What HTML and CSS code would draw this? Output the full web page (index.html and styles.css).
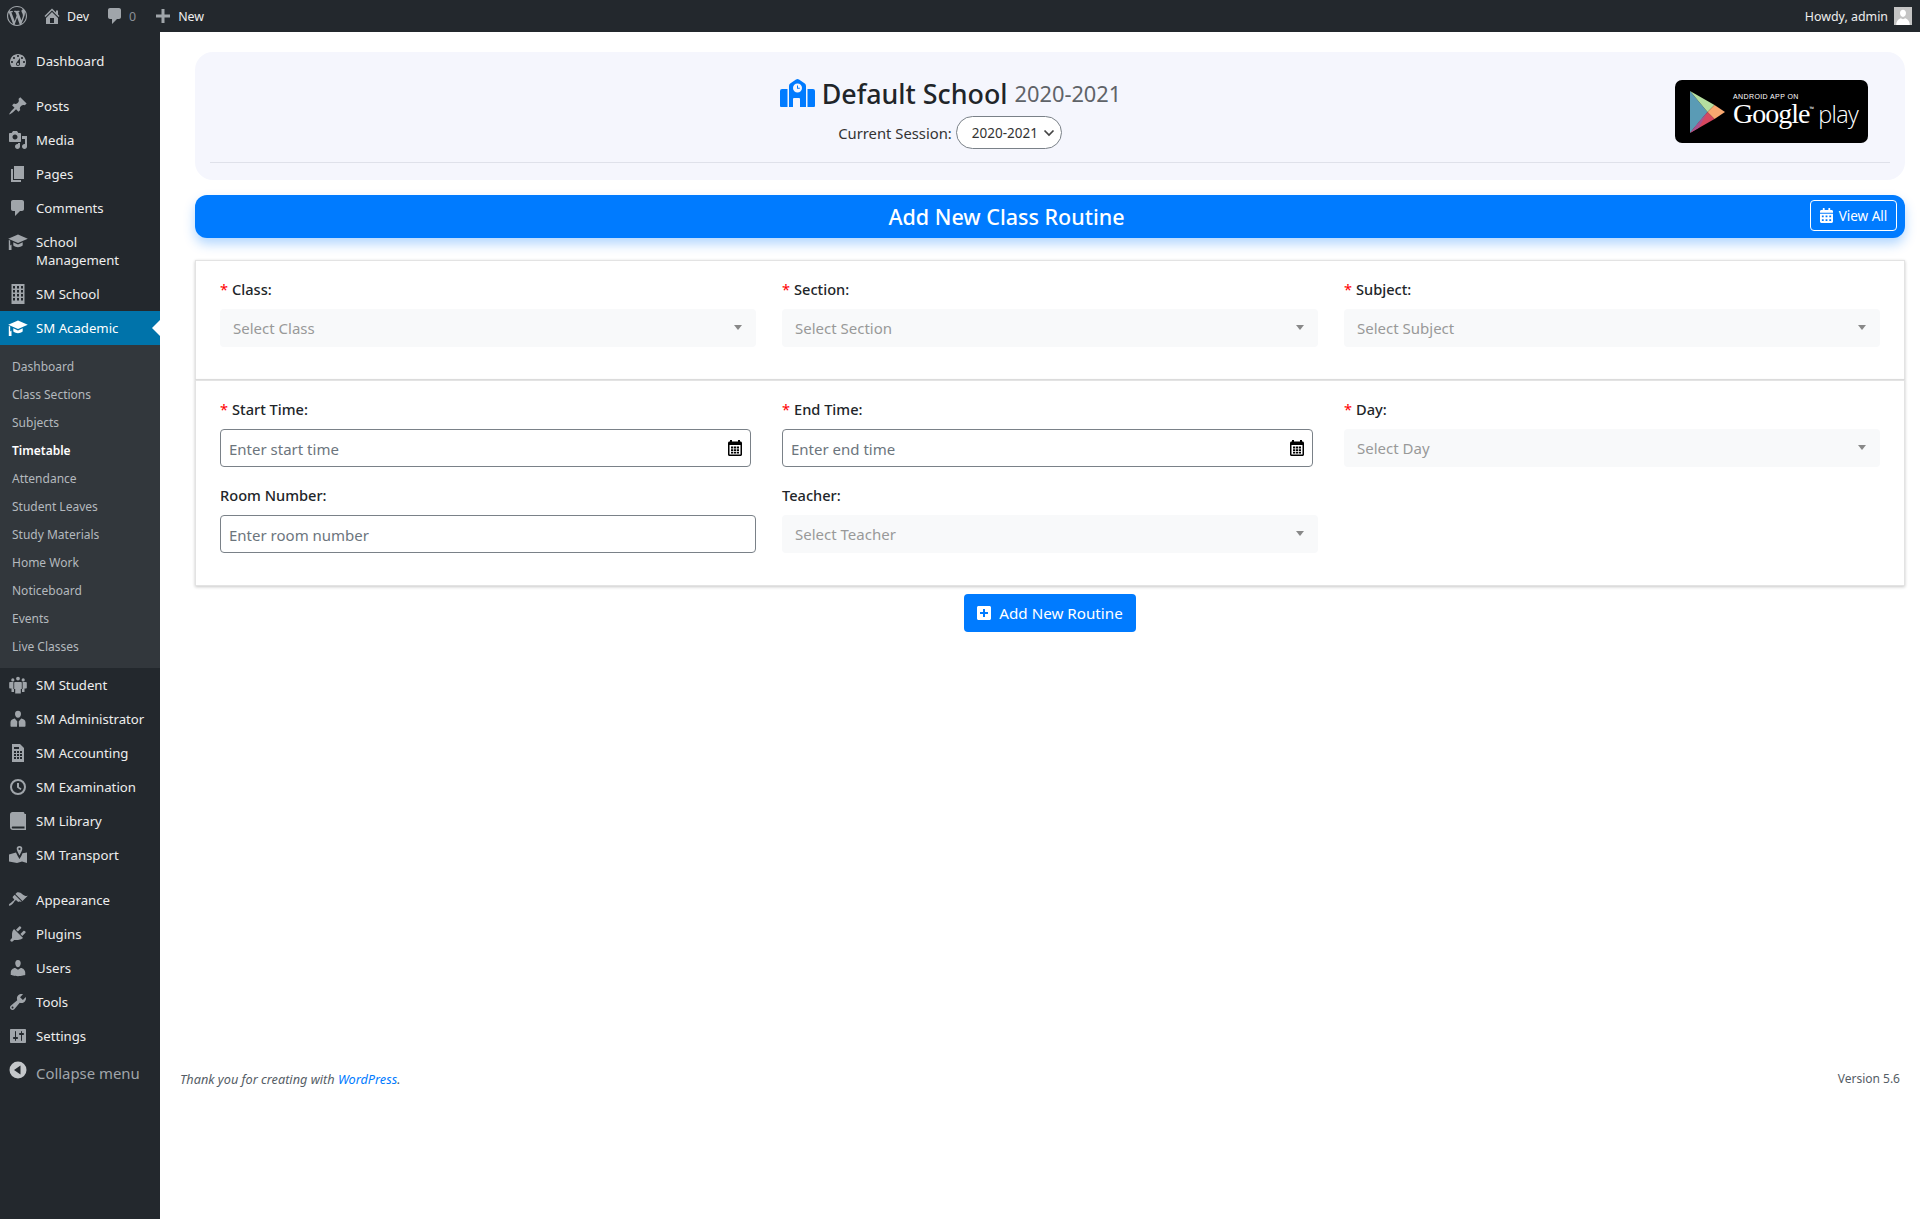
FILE: index.html
```html
<!DOCTYPE html>
<html lang="en">
<head>
  <meta charset="UTF-8" />
  <title>Add New Class Routine</title>
  <link rel="stylesheet" href="styles.css">
</head>
<body>

  <svg class="defs" xmlns="http://www.w3.org/2000/svg">
    <symbol id="i-wp" viewBox="0 0 20 20"><path fill-rule="evenodd" d="M20 10c0-5.51-4.49-10-10-10C4.48 0 0 4.49 0 10c0 5.52 4.48 10 10 10 5.51 0 10-4.48 10-10zM7.78 15.37L4.37 6.22c.55-.02 1.17-.08 1.17-.08.5-.06.44-1.13-.06-1.11 0 0-1.45.11-2.37.11-.18 0-.37 0-.58-.01C4.12 2.69 6.87 1.11 10 1.11c2.33 0 4.45.87 6.05 2.34-.68-.11-1.65.39-1.65 1.58 0 .74.45 1.36.9 2.1.35.61.55 1.36.55 2.46 0 1.49-1.4 5-1.4 5l-3.03-8.37c.54-.02.82-.17.82-.17.5-.05.44-1.25-.06-1.22 0 0-1.44.12-2.38.12-.87 0-2.33-.12-2.33-.12-.5-.03-.56 1.2-.06 1.22l.92.08 1.26 3.41zM17.41 10c.24-.64.74-1.87.43-4.25.7 1.29 1.05 2.71 1.05 4.25 0 3.29-1.73 6.24-4.4 7.78.97-2.59 1.94-5.2 2.92-7.78zM6.1 18.09C3.12 16.65 1.11 13.53 1.11 10c0-1.3.23-2.48.72-3.59C3.25 10.3 4.67 14.2 6.1 18.09zm4.03-6.63l2.58 6.98c-.86.29-1.76.45-2.71.45-.79 0-1.57-.11-2.29-.33.81-2.38 1.62-4.74 2.42-7.1z"/></symbol>
    <symbol id="i-home" viewBox="0 0 20 20"><path fill-rule="evenodd" d="M16 8.5l1.53 1.53-1.06 1.06L10 4.62l-6.47 6.47-1.06-1.06L10 2.5l4 4v-2h2v4zm-6-2.46l6 5.99V18H4v-5.97zM12 17v-5H8v5h4z"/></symbol>
    <symbol id="i-comment" viewBox="0 0 20 20"><path d="M5 2h9c1.1 0 2 .9 2 2v7c0 1.1-.9 2-2 2h-2l-5 5v-5H5c-1.1 0-2-.9-2-2V4c0-1.1.9-2 2-2z"/></symbol>
    <symbol id="i-plus" viewBox="0 0 20 20"><path d="M17 8.500v3h-5.500V17h-3v-5.500H3v-3h5.500V3h3v5.500z"/></symbol>
    <symbol id="i-dash" viewBox="0 0 20 20"><path fill-rule="evenodd" d="M3.76 16h12.48c1.1-1.37 1.76-3.11 1.76-5 0-4.42-3.58-8-8-8s-8 3.58-8 8c0 1.89.66 3.63 1.76 5zM10 4c.55 0 1 .45 1 1s-.45 1-1 1-1-.45-1-1 .45-1 1-1zM6 6c.55 0 1 .45 1 1s-.45 1-1 1-1-.45-1-1 .45-1 1-1zm8 0c.55 0 1 .45 1 1s-.45 1-1 1-1-.45-1-1 .45-1 1-1zm-5.37 5.55L12 7v6c0 1.1-.9 2-2 2s-2-.9-2-2c0-.57.24-1.08.63-1.45zM4 10c.55 0 1 .45 1 1s-.45 1-1 1-1-.45-1-1 .45-1 1-1zm12 0c.55 0 1 .45 1 1s-.45 1-1 1-1-.45-1-1 .45-1 1-1zm-5 3c0-.55-.45-1-1-1s-1 .45-1 1 .45 1 1 1 1-.45 1-1z"/></symbol>
    <symbol id="i-post" viewBox="0 0 20 20"><path d="M10.44 3.02l1.82-1.82 6.36 6.35-1.83 1.82c-1.05-.68-2.48-.57-3.41.36l-.75.75c-.92.93-1.04 2.35-.35 3.41l-1.83 1.82-2.41-2.41-2.8 2.79c-.42.42-3.38 2.71-3.8 2.29s1.86-3.39 2.28-3.81l2.79-2.79L4.1 9.36l1.83-1.82c1.05.69 2.48.57 3.4-.36l.75-.75c.93-.92 1.05-2.35.36-3.41z"/></symbol>
    <symbol id="i-media" viewBox="0 0 20 20"><path fill-rule="evenodd" d="M13 11V4c0-.55-.45-1-1-1h-1.67L9 1H5L3.67 3H2c-.55 0-1 .45-1 1v7c0 .55.45 1 1 1h10c.55 0 1-.45 1-1zM7 4.5c1.38 0 2.5 1.12 2.5 2.5S8.38 9.5 7 9.5 4.5 8.38 4.5 7 5.62 4.5 7 4.5zM14 6h5v10.5c0 1.38-1.12 2.5-2.5 2.5S14 17.88 14 16.5s1.12-2.5 2.5-2.5c.17 0 .34.02.5.05V9h-3V6zm-4 8.05V13h2v3.5c0 1.38-1.12 2.5-2.5 2.5S7 17.88 7 16.5 8.12 14 9.5 14c.17 0 .34.02.5.05z"/></symbol>
    <symbol id="i-pages" viewBox="0 0 20 20"><path d="M6 15V2h10v13H6zm-1 1h8v2H3V5h2v11z"/></symbol>
    <symbol id="i-learn" viewBox="0 0 20 20"><path d="M10 2.500 19.800 6.800 10 11.100.2 6.800zM5.300 10.300l4.700 2.100 4.700-2.100v3.300c-1.500 1-3.100 1.700-4.700 1.700s-3.200-.7-4.700-1.700zM.8 8l1.400.6v4.900l1.300-1V18H.8z"/></symbol>
    <symbol id="i-building" viewBox="0 0 20 20"><path fill-rule="evenodd" d="M3.500 0h13v20h-13zM5 2v2.500h2V2zm4 0v2.500h2V2zm4 0v2.500h2V2zM5 6v2.500h2V6zm4 0v2.500h2V6zm4 0v2.500h2V6zM5 10v2.500h2V10zm4 0v2.500h2V10zm4 0v2.500h2V10zM5 14v2.500h2V14zm4 0v2.500h2V14zm4 0v2.500h2V14z"/></symbol>
    <symbol id="i-group" viewBox="0 0 20 20"><path d="M10 5.500a1.900 1.900 0 1 0 0-3.800 1.900 1.900 0 0 0 0 3.800zm-5.200 1a1.600 1.600 0 1 0 0-3.200 1.600 1.600 0 0 0 0 3.200zm10.400 0a1.600 1.600 0 1 0 0-3.200 1.600 1.600 0 0 0 0 3.200zM7.200 7h5.600c.6 0 1 .4 1 1v6h-1v4.500H7.200V14h-1V8c0-.6.4-1 1-1zM2.200 7h3.200v7h.6v3H3.500v-3.500H2.200c-.6 0-1-.4-1-1V8c0-.6.4-1 1-1zm12.400 0h3.200c.6 0 1 .4 1 1v4.500c0 .6-.4 1-1 1h-1.300V17H14v-3h.6z"/></symbol>
    <symbol id="i-man" viewBox="0 0 20 20"><path d="M10 8.800c-2 0-3-2-3-3.800C7 3 8.200 1.800 10 1.800S13 3 13 5c0 1.800-1 3.800-3 3.800zM6.800 9.500 9.300 12.500 9 17.800H3.500c-.6 0-1-.4-1-1v-3.600c0-2 2-3.400 4.300-3.700zm6.400 0c2.300.3 4.300 1.700 4.300 3.700v3.600c0 .6-.4 1-1 1H11l-.3-5.300z"/></symbol>
    <symbol id="i-calc" viewBox="0 0 20 20"><path fill-rule="evenodd" d="M4 1h8l4 4v14H4zM6 8v2h2V8zm3 0v2h2V8zm3 0v2h2V8zM6 11v2h2v-2zm3 0v2h2v-2zm3 0v2h2v-2zM6 14v2h2v-2zm3 0v2h2v-2zm3 0v2h2v-2zM6 4v2h5V4z"/></symbol>
    <symbol id="i-clock" viewBox="0 0 20 20"><path fill-rule="evenodd" d="M10 2a8 8 0 1 0 0 16 8 8 0 0 0 0-16zm0 2a6 6 0 1 1 0 12 6 6 0 0 1 0-12zM9 6v4.600l3.500 2.400 1-1.400L11 10V6z"/></symbol>
    <symbol id="i-book" viewBox="0 0 20 20"><path d="M16.500 3H18v16H5c-1.700 0-3-1.300-3-3V3.500C2 2.100 3.100 1 4.500 1h10.500c.8 0 1.500.7 1.500 1.500V15.500H5c-.8 0-1.200.4-1.200 1s.4 1 1.200 1h11.500z"/></symbol>
    <symbol id="i-map" viewBox="0 0 20 20"><path fill-rule="evenodd" d="M11.500 1a2.800 2.800 0 0 0-2.800 2.800c0 1.700 1.800 4.700 2.800 6.700 1-2 2.800-5 2.800-6.700A2.800 2.800 0 0 0 11.500 1zm0 1.800a1.100 1.100 0 1 1 0 2.200 1.100 1.100 0 0 1 0-2.200zM8 7.500 9.700 11l1.800 3 1.800-3 1.200-2.800L19 7.500V18l-5-1.500L9 18l-8-1.500V9.500z"/></symbol>
    <symbol id="i-brush" viewBox="0 0 20 20"><path d="M14.480 11.060L7.410 3.990l1.500-1.500c.5-.56 2.300-.47 3.510.32 1.210.8 1.430 1.280 2.910 2.100 1.180.64 2.450 1.260 4.450.85zm-.71.71L6.700 4.700 4.930 6.470c-.39.39-.39 1.020 0 1.410l1.060 1.060c.39.39.39 1.030 0 1.420-.6.6-1.430 1.110-2.210 1.690-.35.26-.7.53-1.010.84C1.430 13.230.4 14.750 1.100 15.450c.7.7 2.210-.33 3.550-1.670.31-.31.58-.66.85-1.010.57-.78 1.080-1.610 1.690-2.210.39-.39 1.020-.39 1.410 0l1.060 1.060c.39.39 1.020.39 1.410 0z"/></symbol>
    <symbol id="i-plug" viewBox="0 0 20 20"><path d="M13.110 4.360L9.870 7.600 8 5.730l3.240-3.240c.35-.34 1.050-.2 1.560.32.52.51.66 1.210.31 1.550zm-8 1.770l.91-1.120 9.010 9.010-1.190.84c-.71.71-2.630 1.160-3.820 1.160H6.140L4.900 17.260c-.59.59-1.540.59-2.120 0-.59-.58-.59-1.530 0-2.120l1.240-1.240v-3.880c0-1.130.4-3.190 1.090-3.890zm7.260 3.970l3.240-3.240c.34-.35 1.040-.21 1.550.31.52.51.66 1.210.31 1.550l-3.240 3.250z"/></symbol>
    <symbol id="i-user" viewBox="0 0 20 20"><path d="M10 9.250c-2.270 0-2.730-3.440-2.730-3.440C7 4.020 7.820 2 9.970 2c2.160 0 2.980 2.020 2.710 3.810 0 0-.41 3.440-2.680 3.440zm0 2.570L12.720 10c2.390 0 4.520 2.330 4.520 4.530v2.490s-3.650 1.130-7.240 1.130c-3.650 0-7.240-1.130-7.240-1.130v-2.490c0-2.250 1.940-4.480 4.470-4.480z"/></symbol>
    <symbol id="i-tool" viewBox="0 0 20 20"><path fill-rule="evenodd" d="M16.680 9.770c-1.340 1.340-3.30 1.670-4.950.99l-5.410 6.520c-.99.99-2.590.99-3.580 0s-.99-2.590 0-3.570l6.520-5.420c-.68-1.650-.35-3.610.99-4.950 1.280-1.280 3.120-1.620 4.720-1.060l-2.890 2.890 2.820 2.820 2.860-2.870c.53 1.580.18 3.390-1.080 4.650zM3.810 16.210c.4.39 1.040.39 1.430 0 .4-.4.4-1.040 0-1.430-.39-.4-1.030-.4-1.430 0-.39.39-.39 1.030 0 1.430z"/></symbol>
    <symbol id="i-set" viewBox="0 0 20 20"><path fill-rule="evenodd" d="M18 16V4c0-.55-.45-1-1-1H3c-.55 0-1 .45-1 1v12c0 .55.45 1 1 1h14c.55 0 1-.45 1-1zM8 11h1c.55 0 1 .45 1 1s-.45 1-1 1H8v1.500c0 .28-.22.5-.5.5s-.5-.22-.5-.5V13H6c-.55 0-1-.45-1-1s.45-1 1-1h1V5.500c0-.28.22-.5.5-.5s.5.22.5.5V11zm5-2h-1c-.55 0-1-.45-1-1s.45-1 1-1h1V5.500c0-.28.22-.5.5-.5s.5.22.5.5V7h1c.55 0 1 .45 1 1s-.45 1-1 1h-1v5.500c0 .28-.22.5-.5.5s-.5-.22-.5-.5V9z"/></symbol>
    <symbol id="i-back" viewBox="0 0 20 20"><path fill-rule="evenodd" d="M10 1.500a8.500 8.500 0 1 0 0 17 8.500 8.500 0 0 0 0-17zM12.500 14.500 6 10l6.500-4.500z"/></symbol>
    <symbol id="i-cal" viewBox="0 0 448 512"><path d="M0 464c0 26.500 21.500 48 48 48h352c26.500 0 48-21.500 48-48V192H0v272zm320-196c0-6.600 5.400-12 12-12h40c6.600 0 12 5.400 12 12v40c0 6.600-5.400 12-12 12h-40c-6.600 0-12-5.400-12-12v-40zm0 128c0-6.600 5.400-12 12-12h40c6.600 0 12 5.400 12 12v40c0 6.600-5.400 12-12 12h-40c-6.600 0-12-5.400-12-12v-40zM192 268c0-6.600 5.400-12 12-12h40c6.600 0 12 5.400 12 12v40c0 6.600-5.400 12-12 12h-40c-6.600 0-12-5.400-12-12v-40zm0 128c0-6.600 5.400-12 12-12h40c6.600 0 12 5.400 12 12v40c0 6.600-5.400 12-12 12h-40c-6.600 0-12-5.400-12-12v-40zM64 268c0-6.600 5.400-12 12-12h40c6.600 0 12 5.400 12 12v40c0 6.600-5.400 12-12 12H76c-6.600 0-12-5.400-12-12v-40zm0 128c0-6.600 5.400-12 12-12h40c6.600 0 12 5.400 12 12v40c0 6.600-5.400 12-12 12H76c-6.600 0-12-5.400-12-12v-40zM400 64h-48V16c0-8.800-7.200-16-16-16h-32c-8.800 0-16 7.200-16 16v48H160V16c0-8.800-7.200-16-16-16h-32c-8.800 0-16 7.200-16 16v48H48C21.500 64 0 85.500 0 112v48h448v-48c0-26.500-21.500-48-48-48z"/></symbol>
    <symbol id="i-picker" viewBox="0 0 16 16"><path fill-rule="evenodd" d="M3 0h2v1.500h6V0h2v1.500h.5c.8 0 1.500.7 1.500 1.500v11.500c0 .8-.7 1.500-1.500 1.500h-11C1.700 16 1 15.300 1 14.500V3c0-.8.7-1.500 1.500-1.500H3zM2.500 5v9.500h11V5zM4 6.500h2.200v2H4zm2.900 0h2.200v2H6.900zm2.900 0H12v2H9.800zM4 9.300h2.200v2H4zm2.900 0h2.200v2H6.900zm2.900 0H12v2H9.800zM4 12h2.200v1.500H4zm2.900 0h2.200v1.500H6.900zm2.900 0H12v1.500H9.800z"/></symbol>
  </svg>

  <header class="adminbar">
    <svg class="bar-logo"><use href="#i-wp"/></svg>
    <svg class="bar-ic home"><use href="#i-home"/></svg>
    <span class="bar-txt">Dev</span>
    <svg class="bar-ic cmt"><use href="#i-comment"/></svg>
    <span class="bar-txt dim">0</span>
    <svg class="bar-ic plus"><use href="#i-plus"/></svg>
    <span class="bar-txt">New</span>
    <span class="bar-txt howdy">Howdy, admin</span>
    <span class="avatar">
      <svg viewBox="0 0 20 20"><path d="M10 3c2 0 3.300 1.500 3.300 3.700S12 11 10 11 6.700 9 6.700 6.700 8 3 10 3zM2.500 20c0-4.500 3-7 5-7.500l2.500 1 2.500-1c2 .5 5 3 5 7.500z"/></svg>
    </span>
  </header>

  <div class="layout">
    <nav class="sidebar">
      <ul class="menu">
        <li><svg><use href="#i-dash"/></svg>Dashboard</li>
        <li class="sep"><svg><use href="#i-post"/></svg>Posts</li>
        <li><svg><use href="#i-media"/></svg>Media</li>
        <li><svg><use href="#i-pages"/></svg>Pages</li>
        <li><svg><use href="#i-comment"/></svg>Comments</li>
        <li class="two"><svg><use href="#i-learn"/></svg>School<br>Management</li>
        <li><svg><use href="#i-building"/></svg>SM School</li>
        <li class="active"><svg><use href="#i-learn"/></svg>SM Academic</li>
      </ul>
      <ul class="submenu">
        <li>Dashboard</li>
        <li>Class Sections</li>
        <li>Subjects</li>
        <li class="current">Timetable</li>
        <li>Attendance</li>
        <li>Student Leaves</li>
        <li>Study Materials</li>
        <li>Home Work</li>
        <li>Noticeboard</li>
        <li>Events</li>
        <li>Live Classes</li>
      </ul>
      <ul class="menu">
        <li><svg><use href="#i-group"/></svg>SM Student</li>
        <li><svg><use href="#i-man"/></svg>SM Administrator</li>
        <li><svg><use href="#i-calc"/></svg>SM Accounting</li>
        <li><svg><use href="#i-clock"/></svg>SM Examination</li>
        <li><svg><use href="#i-book"/></svg>SM Library</li>
        <li><svg><use href="#i-map"/></svg>SM Transport</li>
        <li class="sep"><svg><use href="#i-brush"/></svg>Appearance</li>
        <li><svg><use href="#i-plug"/></svg>Plugins</li>
        <li><svg><use href="#i-user"/></svg>Users</li>
        <li><svg><use href="#i-tool"/></svg>Tools</li>
        <li><svg><use href="#i-set"/></svg>Settings</li>
        <li class="collapse"><svg><use href="#i-back"/></svg>Collapse menu</li>
      </ul>
    </nav>

    <main class="content">
      <section class="school">
        <div class="school-row">
          <div class="school-info">
            <h1 class="school-name">
              <svg class="school-ic" viewBox="0 0 35 28"><path fill-rule="evenodd" d="M0 12q0-2 2-2h5.500v18H1q-1 0-1-1zM35 12q0-2-2-2h-5.500v18H34q1 0 1-1zM17.500 0q.9 0 1.500.4l5.800 4.200q1.200.8 1.200 2.400V28h-6v-8q0-1-1-1h-5q-1 0-1 1v8H9V7q0-1.600 1.200-2.400L16 .4q.6-.4 1.500-.4zM17.500 4.500a4.500 4.500 0 1 0 0 9 4.500 4.500 0 0 0 0-9zM17 6.500h1v2.200h1.800v1H17z"/></svg>
              Default School <small>2020-2021</small>
            </h1>
            <div class="session">
              <span>Current Session:</span>
              <span class="session-select">2020-2021
                <svg viewBox="0 0 12 8"><path d="M1.500 1.500 6 6l4.500-4.500" fill="none" stroke="#444" stroke-width="1.700"/></svg>
              </span>
            </div>
          </div>
          <div class="play">
            <svg class="play-tri" viewBox="0 0 40 48">
              <polygon points="0,0 0,48 20,24" fill="#5a9bb5"/>
              <polygon points="0,0 28,16 20,24" fill="#b5dfa0"/>
              <polygon points="0,48 28,32 20,24" fill="#d6475f"/>
              <polygon points="0,48 12,33 20,24 10,42" fill="#a8538f"/>
              <polygon points="28,16 40,24 28,32 20,24" fill="#f9a870"/>
            </svg>
            <div class="play-text">
              <span class="play-small">ANDROID APP ON</span>
              <span class="play-big"><span class="google">Google</span><span class="tm">™</span> <span class="gplay">play</span></span>
            </div>
          </div>
        </div>
      </section>

      <div class="titlebar">
        <h2>Add New Class Routine</h2>
        <a class="view-all"><svg><use href="#i-cal"/></svg>View All</a>
      </div>

      <section class="card">
        <div class="grid">
          <div class="field">
            <label><em>*</em>Class:</label>
            <div class="pick">Select Class<i></i></div>
          </div>
          <div class="field">
            <label><em>*</em>Section:</label>
            <div class="pick">Select Section<i></i></div>
          </div>
          <div class="field">
            <label><em>*</em>Subject:</label>
            <div class="pick">Select Subject<i></i></div>
          </div>
        </div>
      </section>

      <section class="card">
        <div class="grid">
          <div class="field">
            <label><em>*</em>Start Time:</label>
            <div class="time">
              <input type="text" placeholder="Enter start time">
              <svg><use href="#i-picker"/></svg>
            </div>
          </div>
          <div class="field">
            <label><em>*</em>End Time:</label>
            <div class="time">
              <input type="text" placeholder="Enter end time">
              <svg><use href="#i-picker"/></svg>
            </div>
          </div>
          <div class="field">
            <label><em>*</em>Day:</label>
            <div class="pick">Select Day<i></i></div>
          </div>
          <div class="field">
            <label>Room Number:</label>
            <input class="plain" type="text" placeholder="Enter room number">
          </div>
          <div class="field">
            <label>Teacher:</label>
            <div class="pick">Select Teacher<i></i></div>
          </div>
        </div>
      </section>

      <div class="actions">
        <button class="add">
          <svg viewBox="0 0 14 14"><path fill-rule="evenodd" d="M1.500 0h11C13.300 0 14 .7 14 1.500v11c0 .8-.7 1.500-1.500 1.500h-11C.7 14 0 13.300 0 12.500v-11C0 .7.7 0 1.500 0zM6 3v3H3v2h3v3h2V8h3V6H8V3z"/></svg>
          Add New Routine
        </button>
      </div>

      <footer class="foot">
        <span class="thanks">Thank you for creating with <a>WordPress</a>.</span>
        <span>Version 5.6</span>
      </footer>
    </main>
  </div>

</body>
</html>
```

FILE: styles.css
```css
* {
  box-sizing: border-box;
}
html, body {
  margin: 0;
  padding: 0;
}
body {
  font-family: "Noto Sans", "Open Sans", sans-serif;
  color: #212529;
  background: #fff;
  height: 1219px;
  overflow: hidden;
}
.defs {
  display: none;
}

/* admin bar */
.adminbar {
  height: 32px;
  background: #23282d;
  display: flex;
  align-items: center;
  padding: 0 8px 0 7px;
  color: #eee;
}
.bar-logo {
  width: 20px;
  height: 20px;
  fill: #a0a5aa;
}
.bar-ic {
  width: 20px;
  height: 20px;
  fill: #a0a5aa;
}
.bar-ic.home {
  margin-left: 15px;
}
.bar-ic.cmt {
  margin-left: 16px;
}
.bar-ic.plus {
  margin-left: 17px;
}
.bar-txt {
  font-size: 12.4px;
  margin-left: 5px;
}
.bar-txt.dim {
  color: #8b9097;
  margin-left: 4px;
}
.howdy {
  margin-left: auto;
}
.avatar {
  width: 18px;
  height: 18px;
  margin-left: 6px;
  background: #c4c4c4;
  display: flex;
}
.avatar svg {
  fill: #fff;
  width: 18px;
  height: 18px;
}

.layout {
  display: flex;
  height: 1187px;
}

/* sidebar */
.sidebar {
  width: 160px;
  flex: none;
  background: #23282d;
  padding-top: 12px;
}
.menu, .submenu {
  list-style: none;
  margin: 0;
  padding: 0;
}
.menu li {
  position: relative;
  height: 34px;
  padding: 8px 0 0 36px;
  font-size: 13.2px;
  line-height: 18px;
  color: #eee;
  white-space: nowrap;
}
.menu li svg {
  position: absolute;
  left: 8px;
  top: 7px;
  width: 20px;
  height: 20px;
  fill: #a0a5aa;
}
.menu li.sep {
  margin-top: 11px;
}
.menu li.two {
  height: 52px;
}
.menu li.active {
  background: #0073aa;
  color: #fff;
}
.menu li.active svg {
  fill: #fff;
}
.menu li.active::after {
  content: "";
  position: absolute;
  right: 0;
  top: 9px;
  border: 8px solid transparent;
  border-left: 0;
  border-right-color: #fff;
}
.menu li.collapse {
  font-size: 14.9px;
  color: #a0a5aa;
  padding-top: 11px;
  height: 40px;
}
.menu li.collapse svg {
  top: 7px;
  fill: #c4c7ca;
}
.submenu {
  background: #32373c;
  padding: 8px 0 7px;
}
.submenu li {
  height: 28px;
  line-height: 28px;
  padding-left: 12px;
  font-size: 12px;
  color: #b4b9be;
}
.submenu li.current {
  color: #fff;
  font-weight: 600;
}

/* main column */
.content {
  flex: 1;
  min-width: 0;
  padding: 20px 15px 0 35px;
}
.school {
  height: 128px;
  background: #f5f6fd;
  border-radius: 18px;
  padding: 0 15px;
}
.school-row {
  height: 111px;
  display: flex;
  border-bottom: 1px solid #dfe1ea;
}
.school-info {
  flex: 1;
  padding: 24px 0 0 16px;
  text-align: center;
}
.school-name {
  margin: 0;
  font-size: 26.8px;
  font-weight: 500;
  line-height: 36px;
  color: #212529;
  display: flex;
  justify-content: center;
  align-items: center;
  gap: 7px;
}
.school-name small {
  font-size: 21.8px;
  font-weight: 400;
  color: #5f6368;
}
.school-ic {
  width: 35px;
  height: 28px;
  margin-top: -2px;
  fill: #007bff;
}
.session {
  display: flex;
  justify-content: center;
  align-items: center;
  gap: 4px;
  margin-top: 4px;
  padding-right: 1px;
  font-size: 14.8px;
  color: #333;
}
.session-select {
  width: 106px;
  height: 33px;
  border: 1px solid #7a8188;
  border-radius: 17px;
  background: #fff;
  font-size: 13.5px;
  display: flex;
  align-items: center;
  padding-left: 15px;
  gap: 5px;
}
.session-select svg {
  width: 12px;
  height: 8px;
}
.play {
  width: 193px;
  height: 63px;
  margin: 28px 22px 0 0;
  background: #000;
  border-radius: 7px;
  display: flex;
  align-items: center;
  padding-left: 14px;
  color: #fff;
}
.play-tri {
  width: 37px;
  height: 42px;
  flex: none;
}
.play-text {
  margin-left: 7px;
  display: flex;
  flex-direction: column;
}
.play-small {
  font-family: "Liberation Sans", sans-serif;
  font-size: 7px;
  letter-spacing: .4px;
  line-height: 9px;
}
.play-big {
  line-height: 27px;
  white-space: nowrap;
  margin-top: -5px;
}
.google {
  font-family: "Liberation Serif", serif;
  font-size: 28px;
  font-weight: 400;
  letter-spacing: -1px;
}
.tm {
  font-size: 6px;
  vertical-align: 12px;
}
.gplay {
  font-family: "Open Sans", sans-serif;
  font-weight: 300;
  font-size: 23.5px;
  letter-spacing: -.7px;
}

.titlebar {
  margin-top: 15px;
  height: 43px;
  background: #007bff;
  border-radius: 12px;
  box-shadow: 0 6px 12px rgba(0, 123, 255, .3);
  display: flex;
  align-items: center;
  padding: 0 8px;
}
.titlebar h2 {
  flex: 1;
  margin: 0;
  text-align: center;
  color: #fff;
  font-size: 21.5px;
  font-weight: 500;
}
.view-all {
  width: 87px;
  height: 31px;
  margin-top: -2px;
  border: 1px solid #fff;
  border-radius: 4px;
  color: #fff;
  font-size: 13.5px;
  display: flex;
  align-items: center;
  justify-content: center;
  gap: 6px;
}
.view-all svg {
  width: 13px;
  height: 15px;
  fill: #fff;
}

/* form cards */
.card {
  background: #fff;
  border: 1px solid #e3e3e3;
  box-shadow: 0 1px 3px rgba(0, 0, 0, .22);
  padding: 17px 24px 32px;
}
.titlebar + .card {
  margin-top: 22px;
}
.grid {
  display: grid;
  grid-template-columns: repeat(3, 536px);
  column-gap: 26px;
  row-gap: 17px;
}
.field label {
  display: block;
  height: 23px;
  margin-bottom: 8px;
  font-size: 14.6px;
  font-weight: 500;
  line-height: 23px;
  color: #212529;
}
.field em {
  color: #f00;
  font-style: normal;
  font-weight: 400;
  margin-right: 4px;
}
.pick {
  position: relative;
  height: 38px;
  background: #f8f9fa;
  border-radius: 4px;
  padding-left: 13px;
  font-size: 15px;
  line-height: 38px;
  color: #999;
}
.pick i {
  position: absolute;
  right: 14px;
  top: 16px;
  border: 4.5px solid transparent;
  border-top: 5px solid #888;
  border-bottom: 0;
}
.time {
  display: flex;
  align-items: center;
  height: 38px;
  width: 531px;
  border: 1px solid #7a8188;
  border-radius: 4px;
  padding-right: 7px;
}
.time input {
  flex: 1;
  height: 100%;
  border: 0;
  background: none;
  outline: 0;
  padding: 2px 0 0 8px;
  font: 15px "Noto Sans", sans-serif;
}
.time svg {
  width: 16px;
  height: 16px;
  fill: #000;
}
input::placeholder {
  color: #6c757d;
  opacity: 1;
}
.plain {
  display: block;
  width: 100%;
  height: 38px;
  border: 1px solid #7a8188;
  border-radius: 4px;
  padding: 2px 0 0 8px;
  font: 15px "Noto Sans", sans-serif;
}

.actions {
  display: flex;
  justify-content: center;
  margin-top: 8px;
}
.add {
  width: 172px;
  height: 38px;
  border: 0;
  border-radius: 4px;
  background: #007bff;
  color: #fff;
  font: 15.2px "Noto Sans", sans-serif;
  display: flex;
  align-items: center;
  justify-content: center;
  gap: 8px;
}
.add svg {
  width: 14px;
  height: 14px;
  fill: #fff;
}

.foot {
  display: flex;
  justify-content: space-between;
  margin: 438px 5px 0 -15px;
  font-size: 12px;
  line-height: 18px;
  color: #555d66;
}
.thanks {
  font-size: 12.7px;
  font-style: italic;
}
.foot a {
  color: #007bff;
}
```
